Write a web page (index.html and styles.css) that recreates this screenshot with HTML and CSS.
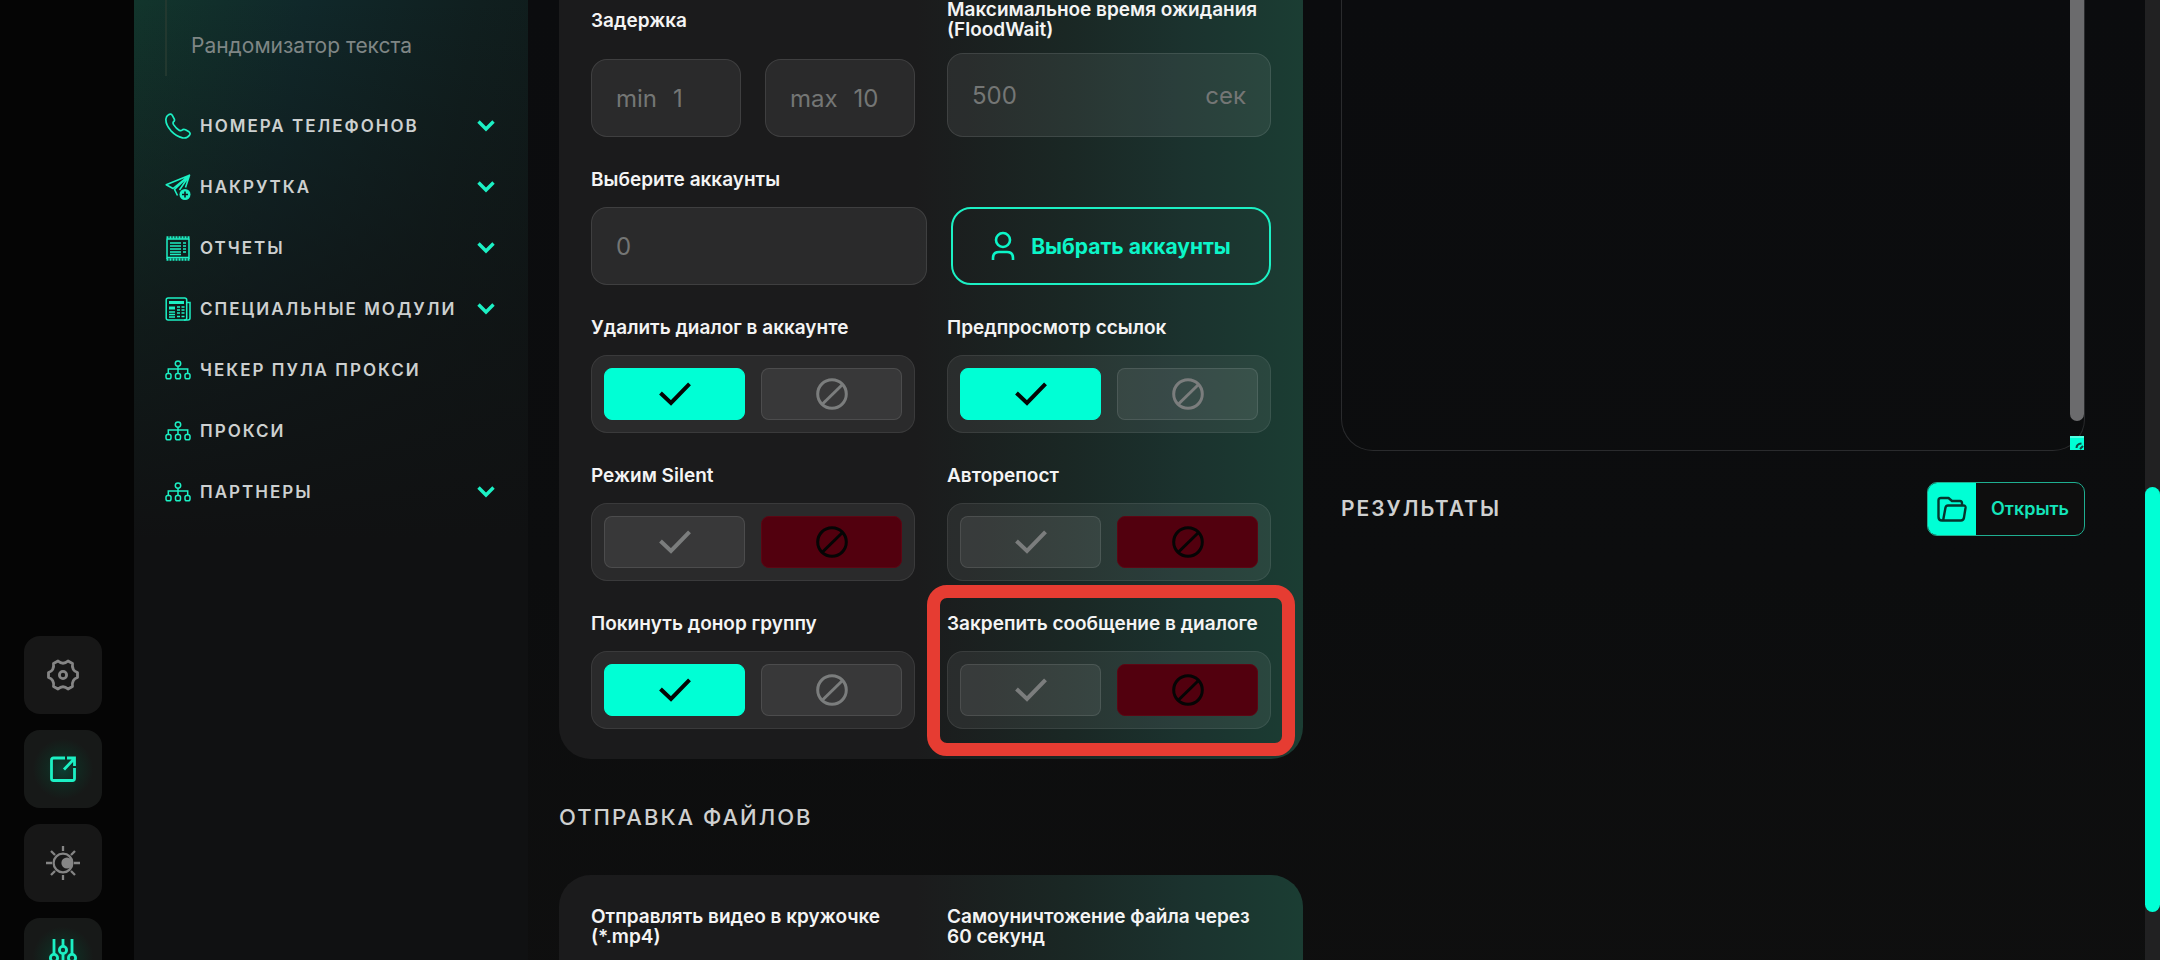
FILE: index.html
```html
<!DOCTYPE html>
<html lang="ru">
<head>
<meta charset="utf-8">
<title>Отправка сообщений</title>
<link rel="stylesheet" href="styles.css">
</head>
<body>
<svg class="sprite" aria-hidden="true">
  <symbol id="i-chevron" viewBox="0 0 18 12"><path d="M1.500 1.500 9 9l7.500-7.500" fill="none" stroke="currentColor" stroke-width="3.400"/></symbol>
  <symbol id="i-network" viewBox="0 0 26 20"><g fill="none" stroke="currentColor" stroke-width="1.500"><circle cx="13" cy="3.600" r="2.700"/><path d="M13 6.300v7M3.300 13V9h19.400v4"/><rect x="1" y="13.500" width="5" height="5.200" rx="1.800"/><rect x="10.500" y="13.500" width="5" height="5.200" rx="1.800"/><rect x="20" y="13.500" width="5" height="5.200" rx="1.800"/></g></symbol>
  <symbol id="i-check" viewBox="0 0 32 24"><path d="M1.500 11 12 21 30.500 1.800" fill="none" stroke="currentColor" stroke-width="4"/></symbol>
  <symbol id="i-ban" viewBox="0 0 32 32"><circle cx="16" cy="16" r="14.300" fill="none" stroke="currentColor" stroke-width="3"/><path d="M6.500 26 26.500 6.500" stroke="currentColor" stroke-width="3"/></symbol>
</svg>

<div class="page">
  <div class="rail">
    <button class="rail-btn" type="button" aria-label="Настройки">
      <svg width="32" height="32" viewBox="0 0 32 32" fill="none" stroke="currentColor" stroke-width="2.800" stroke-linejoin="round"><path d="M11 2Q16 6.500 21 2L25.500 4.500Q24.500 11.500 30.500 13.500V18.500Q24.500 20.500 25.500 27.500L21 30Q16 25.500 11 30L6.500 27.500Q7.500 20.500 1.500 18.500V13.500Q7.500 11.500 6.500 4.500Z"/><circle cx="16" cy="16" r="3.600"/></svg>
    </button>
    <button class="rail-btn rail-btn--on" type="button" aria-label="Открыть в новом окне">
      <svg width="28" height="28" viewBox="0 0 28 28" fill="none" stroke="currentColor" stroke-width="2.800"><path d="M16 3H4.500Q2.500 3 2.500 5v18.500q0 2 2 2h19q2 0 2-2V13"/><path d="M15 14.500 25 4M18 3h7.500v8"/></svg>
    </button>
    <button class="rail-btn" type="button" aria-label="Тема">
      <svg width="34" height="34" viewBox="0 0 34 34" fill="none" stroke="currentColor" stroke-width="2.300"><circle cx="17" cy="17" r="9.400"/><circle cx="21" cy="17" r="5.600" fill="currentColor" stroke="none"/><path d="M17 0v5M17 29v5M0 17h6M28 17h6M5 5l4 4M25 25l4 4M5 29l4-4M25 9l4-4"/></svg>
    </button>
    <button class="rail-btn rail-btn--on" type="button" aria-label="Параметры">
      <svg width="28" height="36" viewBox="0 0 28 36" fill="none" stroke="currentColor" stroke-width="2.800"><path d="M5 0v15M5 23v13M14 0v7M14 15v21M23 0v15M23 23v13"/><circle cx="5" cy="19" r="3.600"/><circle cx="14" cy="11" r="3.600"/><circle cx="23" cy="19" r="3.600"/></svg>
    </button>
  </div>

  <nav class="sidebar">
    <div class="submenu"><a class="submenu-link" href="#">Рандомизатор текста</a></div>
    <ul class="menu">
      <li><a class="menu-link" href="#">
        <svg width="26" height="26" viewBox="0 0 26 26" fill="none" stroke="currentColor" stroke-width="1.700" stroke-linejoin="round"><path d="M3.500 1.800Q6 .2 7.300 2.400L9.300 6.200Q10 7.800 8.300 9 7.700 10 8.600 11.600 11 15.400 14.400 17.400 16 18 17 17.200 18.400 15.800 20.500 16.800L24 18.800Q25.800 20.200 24.600 22 22 25.800 17.500 24.800 11.500 23.500 6 17.800.5 11.500.9 6 1.200 3 3.500 1.800Z"/></svg>
        <span>Номера телефонов</span><svg class="chev"><use href="#i-chevron"/></svg></a></li>
      <li><a class="menu-link" href="#">
        <svg width="26" height="26" viewBox="0 0 26 26" fill="none" stroke="currentColor" stroke-width="1.600" stroke-linejoin="round"><path d="M24.500 1.200 1.200 10.800 8 14.500 24.500 1.200 9.500 15.500 12.500 21.500M24.500 1.200 20.500 13.500M24.500 1.200 14.500 16"/><circle cx="20" cy="20.500" r="5.500" fill="currentColor" stroke="none"/><path d="M20 17.500v6M17 20.500h6" stroke="#0f1a1e"/></svg>
        <span>Накрутка</span><svg class="chev"><use href="#i-chevron"/></svg></a></li>
      <li><a class="menu-link" href="#">
        <svg width="26" height="26" viewBox="0 0 26 26" fill="none" stroke="currentColor" stroke-width="1.500"><path d="M2 3.500v20.500M24 3.500v20.500"/><path d="M1.500 2.500h23M1.500 24.500h23" stroke-width="2.400" stroke-dasharray="2 1"/><path d="M2 4h22M2 22.500h22"/><path d="M5 8h11M5 11h11M5 14h11M5 17h11M5 19.500h11M18 8h3M18 11h3M18 14h3M18 17h3"/></svg>
        <span>Отчеты</span><svg class="chev"><use href="#i-chevron"/></svg></a></li>
      <li><a class="menu-link" href="#">
        <svg width="26" height="26" viewBox="0 0 26 26" fill="none" stroke="currentColor" stroke-width="1.500"><rect x="1.200" y="2" width="20.500" height="22" rx="2"/><path d="M22 6.500h3V22q0 2-2 2H19"/><path d="M4 6.500h15M4 12h6" stroke-width="3"/><path d="M4 16h6M4 18.500h6M4 21h6M12 11h3M12 14h3M12 17h3M12 20.500h3M16.500 11h3M16.500 14h3M16.500 17h3M16.500 20.500h3"/></svg>
        <span>Специальные модули</span><svg class="chev"><use href="#i-chevron"/></svg></a></li>
      <li><a class="menu-link" href="#"><svg width="26" height="20"><use href="#i-network"/></svg><span>Чекер пула прокси</span></a></li>
      <li><a class="menu-link" href="#"><svg width="26" height="20"><use href="#i-network"/></svg><span>Прокси</span></a></li>
      <li><a class="menu-link" href="#"><svg width="26" height="20"><use href="#i-network"/></svg><span>Партнеры</span><svg class="chev"><use href="#i-chevron"/></svg></a></li>
    </ul>
  </nav>

  <main class="main">
    <div class="column">
      <section class="card card--continued">
        <div class="pair pair--first">
          <div class="group group--loose">
            <label class="label" for="delay-min">Задержка</label>
            <div class="range">
              <div class="field"><label for="delay-min">min</label><input id="delay-min" type="text" placeholder="1"></div>
              <div class="field"><label for="delay-max">max</label><input id="delay-max" type="text" placeholder="10"></div>
            </div>
          </div>
          <div class="group group--tight">
            <label class="label" for="flood">Максимальное время ожидания (FloodWait)</label>
            <div class="field field--tall"><input id="flood" type="text" placeholder="500"><span>сек</span></div>
          </div>
        </div>

        <div class="group">
          <label class="label" for="accounts">Выберите аккаунты</label>
          <div class="accounts">
            <div class="field"><input id="accounts" type="text" placeholder="0"></div>
            <button class="pick" type="button">
              <svg width="24" height="30" viewBox="0 0 24 30" fill="none" stroke="currentColor" stroke-width="2.600"><circle cx="12" cy="9" r="7"/><path d="M2 29v-2q0-6 6-6h8q6 0 6 6v2"/></svg>
              Выбрать аккаунты
            </button>
          </div>
        </div>

        <div class="pair">
          <fieldset class="group">
            <legend class="label">Удалить диалог в аккаунте</legend>
            <div class="toggle">
              <label class="opt opt--yes"><input type="radio" name="del" aria-label="Да" checked><svg class="check"><use href="#i-check"/></svg></label>
              <label class="opt opt--no"><input type="radio" name="del" aria-label="Нет"><svg class="ban"><use href="#i-ban"/></svg></label>
            </div>
          </fieldset>
          <fieldset class="group">
            <legend class="label">Предпросмотр ссылок</legend>
            <div class="toggle">
              <label class="opt opt--yes"><input type="radio" name="preview" aria-label="Да" checked><svg class="check"><use href="#i-check"/></svg></label>
              <label class="opt opt--no"><input type="radio" name="preview" aria-label="Нет"><svg class="ban"><use href="#i-ban"/></svg></label>
            </div>
          </fieldset>
        </div>

        <div class="pair">
          <fieldset class="group">
            <legend class="label">Режим Silent</legend>
            <div class="toggle">
              <label class="opt opt--yes"><input type="radio" name="silent" aria-label="Да"><svg class="check"><use href="#i-check"/></svg></label>
              <label class="opt opt--no"><input type="radio" name="silent" aria-label="Нет" checked><svg class="ban"><use href="#i-ban"/></svg></label>
            </div>
          </fieldset>
          <fieldset class="group">
            <legend class="label">Авторепост</legend>
            <div class="toggle">
              <label class="opt opt--yes"><input type="radio" name="repost" aria-label="Да"><svg class="check"><use href="#i-check"/></svg></label>
              <label class="opt opt--no"><input type="radio" name="repost" aria-label="Нет" checked><svg class="ban"><use href="#i-ban"/></svg></label>
            </div>
          </fieldset>
        </div>

        <div class="pair">
          <fieldset class="group">
            <legend class="label">Покинуть донор группу</legend>
            <div class="toggle">
              <label class="opt opt--yes"><input type="radio" name="leave" aria-label="Да" checked><svg class="check"><use href="#i-check"/></svg></label>
              <label class="opt opt--no"><input type="radio" name="leave" aria-label="Нет"><svg class="ban"><use href="#i-ban"/></svg></label>
            </div>
          </fieldset>
          <div class="marked">
            <fieldset class="group">
              <legend class="label">Закрепить сообщение в диалоге</legend>
              <div class="toggle">
                <label class="opt opt--yes"><input type="radio" name="pin" aria-label="Да"><svg class="check"><use href="#i-check"/></svg></label>
                <label class="opt opt--no"><input type="radio" name="pin" aria-label="Нет" checked><svg class="ban"><use href="#i-ban"/></svg></label>
              </div>
            </fieldset>
          </div>
        </div>
      </section>

      <h2 class="heading">Отправка файлов</h2>

      <section class="card card--files">
        <div class="pair">
          <p class="label">Отправлять видео в кружочке (*.mp4)</p>
          <p class="label">Самоуничтожение файла через 60 секунд</p>
        </div>
      </section>
    </div>

    <div class="column">
      <div class="log">
        <textarea class="log-text" aria-label="Журнал" readonly></textarea>
        <div class="log-thumb"></div>
        <svg class="log-grip" viewBox="0 0 14 14"><path d="M0 0h14v14H0z" fill="#00ffd5"/><path d="M0 1h14" stroke="#a9fff0" stroke-width="1"/><path d="M6.500 12q0-4 5-4.500M10 13l3-3" fill="none" stroke="#0a4a40" stroke-width="2"/></svg>
      </div>
      <div class="results">
        <h2 class="heading heading--inline">Результаты</h2>
        <button class="open" type="button">
          <span class="open-icon"><svg width="30" height="26" viewBox="0 0 30 26" fill="none" stroke="currentColor" stroke-width="2.400" stroke-linejoin="round"><path d="M25 9V7q0-2-2-2h-8l-3.500-3H4Q1.500 2 1.500 4.500V21q0 3.500 3.500 3.500h19q2.400 0 2.900-2.400L28.500 12q.3-2.500-2-2.500H11q-2 0-2.500 2L6.200 24"/></svg></span>
          <span class="open-text">Открыть</span>
        </button>
      </div>
    </div>
  </main>

  <div class="scroll"><div class="scroll-thumb"></div></div>
</div>
</body>
</html>
```
FILE: styles.css
```css
* { box-sizing: border-box; }

body {
  margin: 0;
  background: #0d0d0e;
  color: #f4f4f4;
  font-family: Inter, "Noto Sans", sans-serif;
}

button, input, textarea { font: inherit; color: inherit; }
h2, p, ul, fieldset { margin: 0; padding: 0; }
fieldset { border: 0; min-width: 0; }
svg { flex: none; }

.sprite { display: none; }

.page {
  display: grid;
  grid-template-columns: 134px 394px 1fr 15px;
  height: 100vh;
  overflow: hidden;
}

/* icon rail */
.rail {
  display: flex;
  flex-direction: column;
  gap: 16px;
  padding: 636px 32px 0 24px;
  background: #050505;
}

.rail-btn {
  display: flex;
  flex: none;
  align-items: center;
  justify-content: center;
  height: 78px;
  padding: 0;
  border: 0;
  border-radius: 16px;
  background: #171717;
  color: #858585;
}

.rail-btn--on {
  background: radial-gradient(circle, #0b3f34 0, #12261f 30%, #171918 55%);
  color: #1cf0c4;
}

/* sidebar */
.sidebar {
  padding: 0 33px 0 31px;
  background:
    linear-gradient(to bottom, rgba(16, 17, 18, 0) 0, rgba(16, 17, 18, .7) 330px, #101112 540px),
    linear-gradient(100deg, #12352c 0, #10282a 30%, #101f1f 60%, #0f1716 100%);
}

.submenu {
  height: 76px;
  padding: 32px 0 0 24px;
  border-left: 2px solid #22382f;
}

.submenu-link {
  color: #7f8685;
  font-size: 21px;
  line-height: 28px;
  text-decoration: none;
}

.menu {
  padding-top: 19px;
  list-style: none;
}

.menu-link {
  display: flex;
  align-items: center;
  gap: 9px;
  height: 61px;
  color: #1cf0c4;
  font-size: 17px;
  font-weight: 600;
  letter-spacing: 2px;
  text-decoration: none;
  text-transform: uppercase;
  white-space: nowrap;
}

.menu-link span { color: #cdd0d0; }

.chev {
  width: 18px;
  height: 12px;
  margin-left: auto;
}

/* content */
.main {
  display: grid;
  grid-template-columns: 1fr 1fr;
  gap: 38px;
  padding: 0 60px 0 31px;
  background: linear-gradient(to bottom, #0b0c0e 0, #0c0d0e 55%, #0f0f0f 100%);
}

.column { min-width: 0; }

.card {
  padding: 32px;
  border-radius: 32px;
  background: linear-gradient(to right, #1b1b1c 0, #1b1b1c 48%, #1a2724 68%, #1b322e 84%, #1b3d33 100%);
}

.card--continued {
  display: flex;
  flex-direction: column;
  gap: 33px;
  padding: 0 32px 30px;
  border-radius: 0 0 32px 32px;
}

.card--files { height: 160px; }

.pair {
  display: grid;
  grid-template-columns: 1fr 1fr;
  gap: 32px;
}

.pair--first { align-items: end; }

.label {
  display: block;
  padding: 0;
  font-size: 19px;
  font-weight: 600;
  line-height: 20px;
}

.group .label { margin-bottom: 17px; }
.group--tight .label { margin-bottom: 13px; }
.group--loose .label { margin-bottom: 28px; }

.range {
  display: grid;
  grid-template-columns: 1fr 1fr;
  gap: 24px;
}

.field {
  display: flex;
  align-items: center;
  gap: 16px;
  height: 78px;
  padding: 0 24px;
  border: 1px solid rgba(255, 255, 255, .1);
  border-radius: 16px;
  background: rgba(255, 255, 255, .065);
  color: #747675;
  font-size: 24px;
}

.field .label,
.field label { margin: 0; }

.field--tall { height: 84px; }

.field input {
  flex: 1;
  width: 0;
  padding: 0;
  border: 0;
  background: none;
  outline: 0;
}

.field input::placeholder { color: #747675; opacity: 1; }

.accounts {
  display: grid;
  grid-template-columns: 336fr 320fr;
  gap: 24px;
}

.pick {
  display: flex;
  align-items: center;
  justify-content: center;
  gap: 16px;
  border: 2px solid #1cf0c4;
  border-radius: 20px;
  background: none;
  color: #0cf5c8;
  font-size: 21px;
  font-weight: 700;
}

.toggle {
  display: grid;
  grid-template-columns: 1fr 1fr;
  gap: 16px;
  height: 78px;
  padding: 12px;
  border: 1px solid rgba(255, 255, 255, .08);
  border-radius: 16px;
  background: rgba(255, 255, 255, .065);
}

.opt {
  display: flex;
  align-items: center;
  justify-content: center;
  border: 1px solid rgba(255, 255, 255, .1);
  border-radius: 8px;
  background: rgba(255, 255, 255, .065);
  color: #7b7d7d;
}

.opt input {
  appearance: none;
  width: 0;
  height: 0;
  margin: 0;
}

.opt--yes:has(:checked) { background: #00ffd5; border-color: #00ffd5; color: #050505; }
.opt--no:has(:checked) { background: #52000e; border-color: #5c0613; color: #050505; }

.check { width: 32px; height: 24px; }
.ban { width: 32px; height: 32px; }

.marked { position: relative; }

.marked::after {
  content: "";
  position: absolute;
  inset: -29px -24px -27px -20px;
  border: 13px solid #e63c32;
  border-radius: 20px;
  pointer-events: none;
}

.heading {
  margin: 44px 0;
  color: #cfd0d0;
  font-size: 22px;
  font-weight: 500;
  letter-spacing: 2px;
  line-height: 28px;
  text-transform: uppercase;
}

.heading--inline {
  margin: 0;
  font-size: 21px;
  font-weight: 600;
}

/* log box */
.log {
  position: relative;
  height: 451px;
}

.log-text {
  display: block;
  width: 100%;
  height: 100%;
  padding: 24px;
  border: 1px solid #2a2b2d;
  border-top: 0;
  border-radius: 0 0 32px 32px;
  background: none;
  outline: 0;
  resize: none;
}

.log-thumb {
  position: absolute;
  top: 0;
  right: 1px;
  width: 14px;
  height: 421px;
  border-radius: 0 0 7px 7px;
  background: #6b6b6d;
}

.log-grip {
  position: absolute;
  right: 1px;
  bottom: 1px;
  width: 14px;
  height: 14px;
}

.results {
  display: flex;
  align-items: center;
  justify-content: space-between;
  margin-top: 31px;
}

.open {
  display: flex;
  height: 54px;
  padding: 0;
  border: 1px solid #1fae90;
  border-radius: 10px;
  overflow: hidden;
  background: #0e0e0e;
  color: #14e5bb;
  font-size: 18px;
  font-weight: 600;
}

.open-icon {
  display: flex;
  align-items: center;
  justify-content: center;
  width: 48px;
  height: 100%;
  background: #00ffd5;
  color: #06352d;
}

.open-text {
  padding: 0 15px;
  line-height: 52px;
}

/* page scrollbar */
.scroll {
  padding-top: 487px;
  background: #212122;
}

.scroll-thumb {
  height: 425px;
  border-radius: 8px;
  background: #00ffd5;
}
```
